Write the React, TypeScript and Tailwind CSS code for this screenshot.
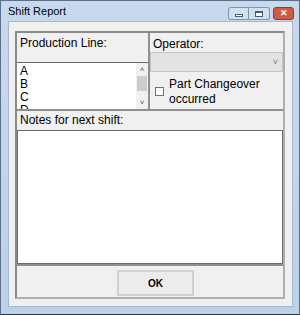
import React from "react";

const font = { fontFamily: '"Liberation Sans", Arial, sans-serif' };

function TitleButtons() {
  return (
    <div className="flex items-start pt-[6px]">
      <div className="flex h-[13px] w-[21px] items-center justify-center rounded-l-[3px] border border-[#8094ae] bg-[#d3e0f0]">
        <div className="mt-[4px] h-[3px] w-[8px] border border-[#4a5d78] bg-white" />
      </div>
      <div className="flex h-[13px] w-[21px] items-center justify-center rounded-r-[3px] border border-l-0 border-[#8094ae] bg-[#d3e0f0]">
        <div className="h-[6px] w-[8px] border border-t-2 border-[#4a5d78] bg-white" />
      </div>
      <div className="ml-[3px] flex h-[13px] w-[21px] items-center justify-center rounded-[3px] border border-[#8c3b2f] bg-[#cf5a45] text-[9px] font-bold leading-none text-white">
        ✕
      </div>
    </div>
  );
}

function ListBox() {
  return (
    <div className="flex h-[47px] border-t border-[#6a6a6a] bg-white">
      <div className="flex-1 overflow-hidden pl-[3px] pt-[2px] text-[12px] leading-[13px] text-black">
        <div>A</div>
        <div>B</div>
        <div>C</div>
        <div className="h-[5px] overflow-hidden">D</div>
      </div>
      <div className="flex w-[12px] flex-col items-center bg-[#f0f0f0] text-[8px] leading-none text-[#505050]">
        <div className="flex h-[13px] items-center">˄</div>
        <div className="h-[15px] w-[10px] bg-[#cdcdcd]" />
        <div className="flex-1" />
        <div className="flex h-[12px] items-center">˅</div>
      </div>
    </div>
  );
}

export default function App() {
  return (
    <div
      className="flex h-[315px] w-[300px] flex-col border border-[#5a6f88] border-b-[#1c3c4c] bg-gradient-to-b from-[#c8d9ee] to-[#bcd0e9]"
      style={font}
    >
      <div className="flex h-[20px] items-start justify-between pl-[7px] pr-[5px]">
        <span className="pt-[5px] text-[11px] leading-none text-black">Shift Report</span>
        <TitleButtons />
      </div>
      <div className="mb-[7px] ml-[7px] mr-[6px] flex flex-1 border border-[#a8b9cf] bg-[#f0f0f0] pb-[7px] pl-[6px] pr-[7px] pt-[9px]">
        <div className="flex flex-1 flex-col border-2 border-[#8a8a8a] border-b-[#b0b0b0] border-r-[#b0b0b0]">
          <div className="flex h-[78px] border-b-2 border-[#8f8f8f]">
            <div className="flex w-[133px] flex-col border-r-2 border-[#8f8f8f]">
              <div className="h-[29px] pl-[3px] pt-[3px] text-[12px] leading-[14px] text-black">
                Production Line:
              </div>
              <ListBox />
            </div>
            <div className="flex flex-1 flex-col">
              <div className="h-[19px] pl-[3px] pt-[4px] text-[12px] leading-[14px] text-black">
                Operator:
              </div>
              <div className="flex h-[20px] items-center justify-end border border-[#c4c4c4] bg-[#e3e3e3] pr-[4px] text-[9px] leading-none text-[#707070]">
                ˅
              </div>
              <div className="flex items-start pl-[5px] pt-[5px]">
                <div className="mt-[10px] h-[9px] w-[9px] border border-[#707070] bg-white" />
                <div className="ml-[5px] text-[12px] leading-[15px] text-black">
                  Part Changeover
                  <br />
                  occurred
                </div>
              </div>
            </div>
          </div>
          <div className="flex h-[155px] flex-col border-b-2 border-[#8f8f8f]">
            <div className="h-[19px] pl-[3px] pt-[2px] text-[12px] leading-[14px] text-black">
              Notes for next shift:
            </div>
            <div className="flex-1 border border-[#6a6a6a] bg-white" />
          </div>
          <div className="flex flex-1 items-start justify-center pl-[11px] pt-[4px]">
            <button className="flex h-[26px] w-[77px] items-center justify-center border-2 border-[#d0d0d0] bg-[#ececec] text-[10px] font-bold text-black">
              OK
            </button>
          </div>
        </div>
      </div>
    </div>
  );
}
